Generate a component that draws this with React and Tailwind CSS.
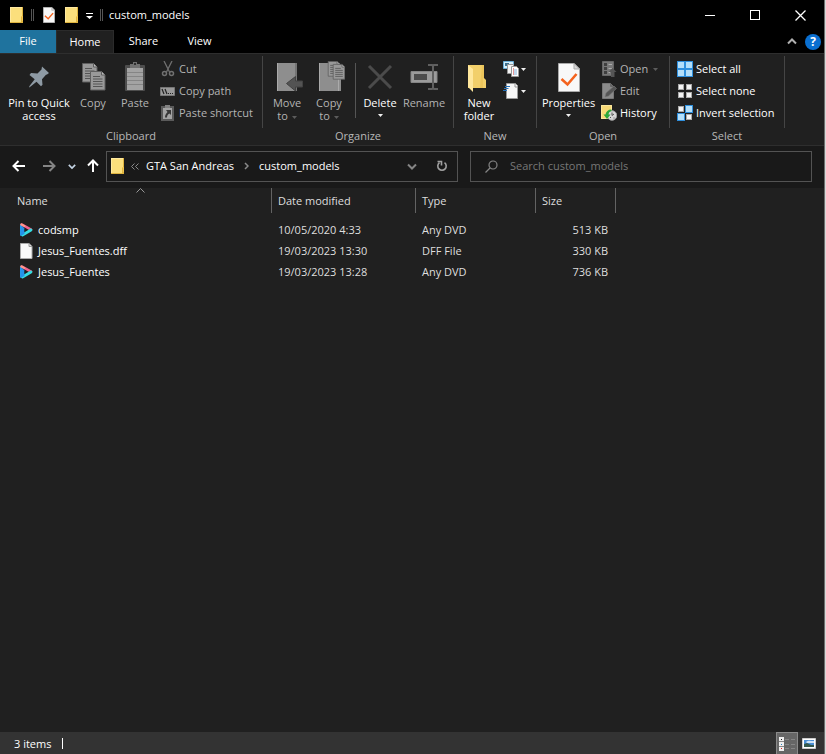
import React from "react";

const Folder = () => (
  <svg width="14" height="16" viewBox="0 0 14 16" aria-hidden="true">
    <path d="M0 0h12v9h1v7H0z" fill="#fbdf7c" />
    <path d="M0 0h12v1H0zM0 0h1v16H0z" fill="#ffe9a0" />
    <path d="M0 15h11V9.500h2V16H0zM12 0h1v9h-1z" fill="#dfb43f" />
    <path d="M11 9h2v5h-1v-4h-1z" fill="#f3c64f" />
  </svg>
);

const CheckDoc = ({ w, h }) => (
  <svg width={w} height={h} viewBox="0 0 22 29" aria-hidden="true">
    <path d="M.5.500h15.500l5.500 5.500v22.500H.5z" fill="#f8f8f8" stroke="#a9a9a9" />
    <path d="M16 .5V6h5.500z" fill="#d8d8d8" stroke="#a9a9a9" />
    <path d="M3.500 16l6 5.500L18.500 11" fill="none" stroke="#f4631e" strokeWidth="2.600" />
  </svg>
);

const Pin = () => (
  <svg width="32" height="32" viewBox="0 0 32 32" aria-hidden="true">
    <path d="M19 5.500l7 6.500-2 1.500-1 .3-4 4.500.5 5.500-1.500 1.500-4.500-4.500L7 26l-1 .5.5-1.500 5.200-6.800L6.500 14l1.500-2 6.500.5 4-4z" fill="#8e9aa4" />
  </svg>
);

const sheet = (x, y, key) => (
  <g key={key} transform={`translate(${x} ${y})`}>
    <path d="M.5.500h11l3.500 3.500v15H.5z" fill="#999" stroke="#5f5f5f" />
    <path d="M11.500.5V4H15" fill="#bbb" stroke="#5f5f5f" />
    <path d="M3 5.500h7M3 8h9.500M3 10.500h9.500M3 13h9.500M3 15.500h9.500" stroke="#555" />
  </g>
);

const Copy = () => (
  <svg width="32" height="32" viewBox="0 0 32 32" aria-hidden="true">
    {sheet(5, 2, "a")}
    {sheet(13, 10, "b")}
  </svg>
);

const Paste = () => (
  <svg width="32" height="32" viewBox="0 0 32 32" aria-hidden="true">
    <rect x="6" y="4" width="20" height="26" rx="1" fill="#4d4d4d" />
    <path d="M8 7h16v22H8z" fill="#a3a3a3" />
    <path d="M8 11.500h16M8 15.500h16M8 19.500h16M8 23.500h16" stroke="#858585" />
    <path d="M11 3h3V1h4v2h3v4H11z" fill="#707070" />
    <path d="M15 2h2v2h-2z" fill="#303030" />
  </svg>
);

const Scissors = () => (
  <svg width="16" height="16" viewBox="0 0 16 16" fill="none" stroke="#707070" aria-hidden="true">
    <path d="M4 0l5.500 11M12 0L6.500 11" strokeWidth="1.300" />
    <circle cx="4.500" cy="12.500" r="2" strokeWidth="1.500" />
    <circle cx="11.500" cy="12.500" r="2" strokeWidth="1.500" />
  </svg>
);

const PathIcon = () => (
  <svg width="16" height="16" viewBox="0 0 16 16" aria-hidden="true">
    <path d="M.5 4.500h14v8H.5z" fill="#9a9a9a" stroke="#777" />
    <path d="M2 6l2 5M5 6l2 5" stroke="#222" strokeWidth="1.200" />
    <path d="M8 10h1v1H8zM10 10h1v1h-1zM12 10h1v1h-1z" fill="#222" />
  </svg>
);

const ShortcutIcon = () => (
  <svg width="16" height="16" viewBox="0 0 16 16" aria-hidden="true">
    <path d="M1 1h13v15H1z" fill="#5a5a5a" />
    <path d="M3 3h9v11H3z" fill="#a3a3a3" />
    <path d="M5 0h5v3H5z" fill="#808080" />
    <path d="M6 5h5v5L9.500 8.500C7.500 9.500 7 11 7 12.500H5C5 10 6 8.500 7.500 7z" fill="#383838" />
  </svg>
);

const MoveTo = () => (
  <svg width="32" height="32" viewBox="0 0 32 32" aria-hidden="true">
    <path d="M6 2h20v28H6z" fill="#8e8e8e" />
    <path d="M6 2h1v28H6z" fill="#aaa" />
    <path d="M24 2h2v28h-2z" fill="#757575" />
    <path d="M15.500 22.500l9-7v4.500h7v6h-7v4z" fill="#535353" stroke="#424242" />
  </svg>
);

const CopyTo = () => (
  <svg width="32" height="32" viewBox="0 0 32 32" aria-hidden="true">
    <path d="M6 2h21v15h1v13H6z" fill="#8e8e8e" />
    <path d="M6 2h1v28H6zM25 17h1v13h-1z" fill="#aaa" />
    <g transform="translate(14 0) scale(.8)">{sheet(1, 0, "a")}</g>
    <g transform="translate(19 3) scale(.8)">{sheet(1, 0, "b")}</g>
  </svg>
);

const DeleteIcon = () => (
  <svg width="32" height="32" viewBox="0 0 32 32" aria-hidden="true">
    <path d="M5 5l22 22M27 5L5 27" stroke="#4b4b4b" strokeWidth="3" />
  </svg>
);

const RenameIcon = () => (
  <svg width="32" height="32" viewBox="0 0 32 32" aria-hidden="true">
    <path d="M3 10.500h26v11H3z" fill="#9b9b9b" stroke="#858585" />
    <path d="M6 13h13v6H6z" fill="#4c4c4c" />
    <path d="M20 4h4l1 1 1-1h4M25 5v22M20 28h4l1-1 1 1h4" fill="none" stroke="#606060" strokeWidth="2" />
  </svg>
);

const NewFolder = () => (
  <svg width="32" height="32" viewBox="0 0 32 32" aria-hidden="true">
    <path d="M5 4h16v13l2 2v8H5z" fill="#f2cf6a" />
    <path d="M19 4h2v13h-1v10h-3z" fill="#e6bb4b" opacity=".5" />
    <path d="M5 4l5 4v23l-5-5z" fill="#ffe79c" />
  </svg>
);

const NewItem = () => (
  <svg width="16" height="16" viewBox="0 0 16 16" aria-hidden="true">
    <path d="M.5.500h10v7H.5z" fill="#d5effb" stroke="#6aaed8" />
    <path d="M2 2h4v3H2z" fill="#3d6f8c" />
    <path d="M4.500 3.500h6v9h-6z" fill="#f5f5f5" stroke="#999" />
    <path d="M8.500 5.500h5l2 2v8h-7z" fill="#fff" stroke="#999" />
    <path d="M10 9h4M10 11h4M10 13h4" stroke="#86b4dc" />
    <path d="M10.500 7v7" stroke="#e69999" />
  </svg>
);

const EasyAccess = () => (
  <svg width="16" height="16" viewBox="0 0 16 16" aria-hidden="true">
    <path d="M3.500.500h9l2 2v13h-11z" fill="#f7f7f7" stroke="#999" />
    <path d="M12 1v3h3" fill="none" stroke="#999" />
    <path d="M2 3.500h5M1 5.500h4.500M0 7.500h4" stroke="#2370b8" />
  </svg>
);

const OpenIcon = () => (
  <svg width="16" height="16" viewBox="0 0 16 16" aria-hidden="true">
    <path d="M1.500.500h11v14h-11z" fill="#777" stroke="#666" />
    <path d="M3 2h3v3H3zM3 6h3v3H3zM3 10h3v3H3z" fill="#3f3f3f" />
    <path d="M7.500 3.500H11M7.500 7.500H11M7.500 11.500H9" stroke="#aaa" />
    <path d="M11.500 7l4 4h-2v5H10v-5H7.500z" fill="#555" />
  </svg>
);

const EditIcon = () => (
  <svg width="16" height="16" viewBox="0 0 16 16" aria-hidden="true">
    <path d="M1.500.500h8l3 3v12h-11z" fill="#8b8b8b" stroke="#777" />
    <path d="M9.500.5v3h3" fill="#666" stroke="#666" />
    <path d="M4 14l1-4 8-7 2.500 2.500-8 7.500z" fill="#555" stroke="#777" strokeWidth=".6" />
  </svg>
);

const HistoryIcon = () => (
  <svg width="16" height="16" viewBox="0 0 16 16" aria-hidden="true">
    <path d="M0 0h11v14H0z" fill="#f8da77" />
    <path d="M.5.500h10v13H.5z" fill="none" stroke="#fbe79e" />
    <circle cx="11" cy="10.500" r="4.800" fill="#d7d7d7" stroke="#9b9b9b" />
    <path d="M11 7.500v3l2-1.500M9 12l1 1M13 12.500v1" fill="none" stroke="#555" />
    <path d="M10.500 4.500C7 4.500 5 6.500 4.500 9.500H2.500L6 14l3.500-4.500h-2c.3-2 1-3 3-3.500z" fill="#2da83a" />
  </svg>
);

const Tiles = ({ on }) => (
  <svg width="16" height="16" viewBox="0 0 16 16" aria-hidden="true">
    {[[0, 0], [8, 0], [0, 8], [8, 8]].map(([x, y], i) =>
      on[i] ? (
        <g key={i}>
          <rect x={x} y={y} width="8" height="8" fill="#2f8fdd" />
          <rect x={x + 1} y={y + 1} width="6" height="6" fill="#b4dffa" />
        </g>
      ) : (
        <rect key={i} x={x + 1.500} y={y + 1.500} width="5" height="5" fill="#f5f5f5" stroke="#aaa" />
      )
    )}
  </svg>
);

const Play = () => (
  <svg width="13" height="14" viewBox="0 0 13 14" aria-hidden="true">
    <path d="M1.300 1.500v11" stroke="#28a4f4" strokeWidth="2.500" />
    <path d="M2 1.700l9 5" stroke="#f0628c" strokeWidth="2.600" strokeLinecap="round" />
    <path d="M2.500 12l8.500-5" stroke="#35dce0" strokeWidth="2.800" strokeLinecap="round" />
    <path d="M.5 2.500v10.500l4-2V5z" fill="#2492ea" />
    <path d="M4.500 5.300v3.400L7.300 7z" fill="#202020" />
    <path d="M1.300 1.300l3 1.700" stroke="#ff9a8b" strokeWidth="2" strokeLinecap="round" />
  </svg>
);

const Blank = () => (
  <svg width="13" height="16" viewBox="0 0 13 16" aria-hidden="true">
    <path d="M.5.500h8.500l3 3v12H.5z" fill="#f9f9f9" stroke="#aaa" />
    <path d="M9 .5v3h3" fill="#ddd" stroke="#999" />
  </svg>
);

const Caret = ({ dim, inline }) => (
  <svg width="5" height="3" viewBox="0 0 5 3" className={inline ? "ml-1 inline-block align-middle" : "shrink-0"} aria-hidden="true">
    <path d="M0 0h5L2.500 3z" fill={dim ? "#5c5c5c" : "#f0f0f0"} />
  </svg>
);

const Chevron = ({ color = "#9a9a9a", up, w = 10, sw = 2 }) => (
  <svg width={w} height="7" viewBox="0 0 10 7" fill="none" stroke={color} strokeWidth={sw} aria-hidden="true">
    <path d={up ? "M1 5.500l4-4 4 4" : "M1 1.500l4 4 4-4"} />
  </svg>
);

const Arrow = ({ turn, color }) => (
  <svg width="14" height="14" viewBox="0 0 14 14" fill="none" stroke={color} strokeWidth="2" className={turn} aria-hidden="true">
    <path d="M1.500 7H13M6.500 2l-5 5 5 5" />
  </svg>
);

const Big = ({ icon, label, dim, caret, width }) => (
  <button className={`flex flex-col items-center pt-[3px] leading-[13px] ${width} ${dim ? "text-[#b4b4b4]" : "text-white"}`}>
    {icon}
    <span className="mt-[3px] text-center">
      {label}
      {caret === "side" && <Caret dim={dim} inline />}
    </span>
    {caret === "below" && <span className="flex h-3 items-center"><Caret /></span>}
  </button>
);

const Small = ({ icon, label, dim, caret }) => (
  <button className={`flex h-[22px] items-center gap-[3px] whitespace-nowrap ${dim ? "text-[#b4b4b4]" : "text-white"}`}>
    {icon}
    {label}
    {caret && <span className="ml-0.5"><Caret dim={dim} /></span>}
  </button>
);

const Group = ({ title, width, children }) => (
  <section aria-label={title} className={`flex shrink-0 ${width}`}>
    <div className="min-w-0 flex-1 pt-1">
      <div className="flex h-[66px]">{children}</div>
      <h2 className="mt-1 h-4 text-center leading-4 text-[#b8b8b8]">{title}</h2>
    </div>
    <div className="mt-0.5 h-[72px] w-px bg-[#454545]" />
  </section>
);

const files = [
  { name: "codsmp", date: "10/05/2020 4:33", type: "Any DVD", size: "513 KB", icon: <Play /> },
  { name: "Jesus_Fuentes.dff", date: "19/03/2023 13:30", type: "DFF File", size: "330 KB", icon: <Blank /> },
  { name: "Jesus_Fuentes", date: "19/03/2023 13:28", type: "Any DVD", size: "736 KB", icon: <Play /> },
];

const TitleRule = () => <span className="h-3 w-[3px] border-x border-[#555]" />;

export default function App() {
  return (
    <div className="flex min-h-screen flex-col border-r border-[#d8d8d8] bg-[#202020] font-['Open_Sans','Noto_Sans',sans-serif] text-[11px] text-white">
      <div className="flex flex-1 flex-col border-r border-[#6e6e6e]">
        <header className="bg-black">
          <div className="flex h-[30px] items-center pl-[10px]">
            <Folder />
            <div className="flex w-4 justify-center"><TitleRule /></div>
            <button aria-label="Properties" className="flex w-[15px] justify-end"><CheckDoc w="12" h="16" /></button>
            <button aria-label="New folder" className="flex w-6 justify-end"><Folder /></button>
            <button aria-label="Customize toolbar" className="flex w-[21px] justify-center pt-0.5">
              <svg width="7" height="6" viewBox="0 0 7 6" aria-hidden="true"><path d="M0 0h7v1H0zM0 3h7L3.500 6z" fill="#fff" /></svg>
            </button>
            <TitleRule />
            <h1 className="ml-[6px]">custom_models</h1>
            <div className="ml-auto mr-px flex h-full shrink-0">
              <button aria-label="Minimize" className="flex w-[45px] items-center justify-center"><span className="h-px w-[10px] bg-white" /></button>
              <button aria-label="Maximize" className="flex w-[45px] items-center justify-center"><span className="size-[10px] border border-white" /></button>
              <button aria-label="Close" className="flex w-[46px] items-center justify-center">
                <svg width="11" height="11" viewBox="0 0 11 11" stroke="#fff" strokeWidth="1.300" aria-hidden="true"><path d="M.5.500l10 10M10.500.500l-10 10" /></svg>
              </button>
            </div>
          </div>
          <nav className="flex h-[23px] items-stretch">
            <button className="w-14 bg-[#1f739e]">File</button>
            <button className="w-[58px] border-x border-t border-[#2b2b2b] bg-[#202020]">Home</button>
            <button className="w-[59px]">Share</button>
            <button className="w-[53px]">View</button>
            <div className="ml-auto flex items-center gap-2 pr-[3px]">
              <button aria-label="Collapse ribbon"><Chevron up color="#b0b0b0" sw={2} /></button>
              <button aria-label="Help" className="flex size-4 items-center justify-center rounded-full bg-[#0a6fd0] text-xs font-bold leading-4">?</button>
            </div>
          </nav>
        </header>

        <div className="flex h-[93px] overflow-hidden border-y border-[#2e2e2e]">
          <Group title="Clipboard" width="w-[263px]">
            <div className="ml-1 flex">
              <Big icon={<Pin />} label={<>Pin to Quick<br />access</>} width="w-[70px]" />
              <Big icon={<Copy />} label="Copy" dim width="w-[38px]" />
              <Big icon={<Paste />} label="Paste" dim width="w-[46px]" />
            </div>
            <div className="ml-[2px]">
              <Small icon={<Scissors />} label="Cut" dim />
              <Small icon={<PathIcon />} label="Copy path" dim />
              <Small icon={<ShortcutIcon />} label="Paste shortcut" dim />
            </div>
          </Group>
          <Group title="Organize" width="w-[191px]">
            <div className="ml-[3px] flex">
              <Big icon={<MoveTo />} label={<>Move<br />to</>} dim caret="side" width="w-[42px]" />
              <Big icon={<CopyTo />} label={<>Copy<br />to</>} dim caret="side" width="w-[42px]" />
              <div className="ml-[5px] mr-[3px] mt-[5px] h-[55px] w-px bg-[#555]" />
              <Big icon={<DeleteIcon />} label="Delete" caret="below" width="w-[42px]" />
              <Big icon={<RenameIcon />} label="Rename" dim width="w-[46px]" />
            </div>
          </Group>
          <Group title="New" width="w-[83px]">
            <div className="ml-1">
              <Big icon={<NewFolder />} label={<>New<br />folder</>} width="w-[42px]" />
            </div>
            <div className="ml-[3px]">
              <button aria-label="New item" className="flex h-[22px] items-center gap-0.5"><NewItem /><Caret /></button>
              <button aria-label="Easy access" className="flex h-[22px] items-center gap-0.5"><EasyAccess /><Caret /></button>
            </div>
          </Group>
          <Group title="Open" width="w-[133px]">
            <div className="ml-[3px]">
              <Big icon={<span className="flex h-8 items-center"><CheckDoc w="22" h="29" /></span>} label="Properties" caret="below" width="w-[57px]" />
            </div>
            <div className="ml-1">
              <Small icon={<OpenIcon />} label="Open" dim caret />
              <Small icon={<EditIcon />} label="Edit" dim />
              <Small icon={<HistoryIcon />} label="History" />
            </div>
          </Group>
          <Group title="Select" width="w-[115px]">
            <div className="ml-[7px]">
              <Small icon={<Tiles on={[1, 1, 1, 1]} />} label="Select all" />
              <Small icon={<Tiles on={[0, 0, 0, 0]} />} label="Select none" />
              <Small icon={<Tiles on={[0, 1, 1, 0]} />} label="Invert selection" />
            </div>
          </Group>
        </div>

        <div className="flex h-[42px] items-center bg-[#191919] pb-0.5 pr-3">
          <div className="flex w-[106px] shrink-0 items-center pl-3">
            <button aria-label="Back"><Arrow color="#fff" /></button>
            <button aria-label="Forward" className="ml-4"><Arrow color="#858585" turn="rotate-180" /></button>
            <button aria-label="Recent locations" className="ml-3"><Chevron color="#c5d5e5" w={8} /></button>
            <button aria-label="Up" className="ml-[10px]"><Arrow color="#fff" turn="rotate-90" /></button>
          </div>
          <div className="flex h-[31px] min-w-0 flex-1 items-center border border-[#535353] pl-1">
            <Folder />
            <svg width="8" height="7" viewBox="0 0 8 7" fill="none" stroke="#8a8a8a" className="ml-1.5" aria-hidden="true"><path d="M3.500.500l-3 3 3 3M7.500.500l-3 3 3 3" /></svg>
            <button className="ml-[7px] whitespace-nowrap">GTA San Andreas</button>
            <svg width="5" height="8" viewBox="0 0 5 8" fill="none" stroke="#8a8a8a" strokeWidth="1.500" className="mx-[10px]" aria-hidden="true"><path d="M1 1l3 3-3 3" /></svg>
            <button>custom_models</button>
            <button aria-label="Previous locations" className="ml-auto pr-[10px]"><Chevron color="#858585" /></button>
            <button aria-label="Refresh" className="flex h-full w-[30px] items-center justify-center">
              <svg width="12" height="12" viewBox="0 0 12 12" fill="none" stroke="#a0a0a0" strokeWidth="1.600" aria-hidden="true"><path d="M8.500 2.700a4.200 4.200 0 1 1-5 0M1.500 1.500h4v4" /></svg>
            </button>
          </div>
          <label className="ml-3 flex h-[31px] w-[342px] items-center border border-[#535353] pl-[14px]">
            <svg width="13" height="13" viewBox="0 0 13 13" fill="none" stroke="#858585" strokeWidth="1.200" aria-hidden="true"><circle cx="8" cy="5" r="4" /><path d="M5 8l-4.500 4.500" /></svg>
            <input aria-label="Search custom_models" placeholder="Search custom_models" className="ml-[12px] min-w-0 flex-1 bg-transparent outline-none placeholder:text-[#777]" />
          </label>
        </div>

        <main className="flex-1">
          <table className="w-[616px] table-fixed border-separate border-spacing-0 text-left">
            <colgroup>
              <col className="w-[272px]" /><col className="w-[144px]" /><col className="w-[120px]" /><col className="w-[80px]" />
            </colgroup>
            <thead>
              <tr className="h-[25px] text-[#dedede]">
                <th className="relative border-r border-[#636363] p-0 pl-[17px] pt-0.5 font-normal">
                  Name
                  <span className="absolute left-1/2 top-0 flex"><svg width="9" height="5" viewBox="0 0 9 5" fill="none" stroke="#999" aria-hidden="true"><path d="M.5 4.500l4-4 4 4" /></svg></span>
                </th>
                <th className="border-r border-[#636363] p-0 pl-1.5 pt-0.5 font-normal">Date modified</th>
                <th className="border-r border-[#636363] p-0 pl-1.5 pt-0.5 font-normal">Type</th>
                <th className="border-r border-[#636363] p-0 pl-1.5 pt-0.5 font-normal">Size</th>
              </tr>
            </thead>
            <tbody>
              <tr aria-hidden="true" className="h-1.5"><td colSpan={4} className="p-0" /></tr>
              {files.map((f) => (
                <tr key={f.name} className="h-[21px] text-[#dedede]">
                  <td className="p-0 pl-5 text-white"><span className="flex items-center gap-[5px]">{f.icon}<span className="pt-0.5">{f.name}</span></span></td>
                  <td className="p-0 pl-1.5 pt-0.5">{f.date}</td>
                  <td className="p-0 pl-1.5 pt-0.5">{f.type}</td>
                  <td className="p-0 pr-2 pt-0.5 text-right">{f.size}</td>
                </tr>
              ))}
            </tbody>
          </table>
        </main>

        <footer className="flex h-[22px] items-center bg-[#333] pl-[14px]">
          <span className="pt-0.5">3 items</span>
          <span className="ml-[11px] h-[11px] w-px bg-white" />
          <div className="ml-auto flex h-full pr-1">
            <button aria-label="Details view" className="flex w-[22px] items-center justify-center border border-b-0 border-[#8b8b8b] bg-[#666]">
              <svg width="16" height="14" viewBox="0 0 16 14" aria-hidden="true">
                <path d="M0 0h5v14H0z" fill="#eee" />
                <path d="M0 4.500h5M0 9.500h5" stroke="#888" />
                <path d="M2 2h1v1H2z" fill="#222" /><path d="M2 7h1v1H2z" fill="#2380c4" /><path d="M2 11h1v1H2z" fill="#d22" />
                <path d="M6 2.500h4M12 2.500h4M6 7.500h4M12 7.500h4M6 11.500h4M12 11.500h4" stroke="#858585" />
              </svg>
            </button>
            <button aria-label="Large icons" className="flex w-[22px] items-center justify-center">
              <svg width="14" height="11" viewBox="0 0 14 11" aria-hidden="true">
                <path d="M.5.500h13v10H.5z" fill="#fff" stroke="#ccc" />
                <path d="M2 2h10v7H2z" fill="#4b8fd6" /><path d="M4 4c2-2 5-1 8-1v2H5z" fill="#cfe4f7" /><path d="M2 6l3-1 4 2h3v2H2z" fill="#35594d" />
              </svg>
            </button>
          </div>
        </footer>
      </div>
    </div>
  );
}
